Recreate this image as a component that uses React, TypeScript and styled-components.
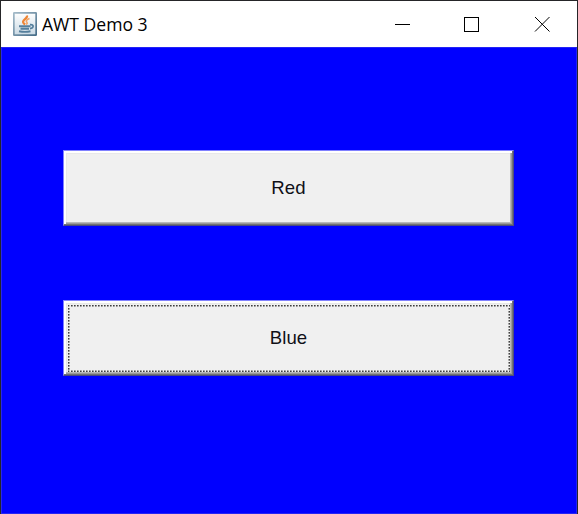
import React from "react";
import styled, { createGlobalStyle, css } from "styled-components";

const GlobalStyle = createGlobalStyle`
  * { box-sizing: border-box; }
  body { margin: 0; overflow: hidden; background: #0000ff; }
`;

const Window = styled.div`
  width: 578px;
  height: 514px;
  display: flex;
  flex-direction: column;
  border: 1px solid #252528;
  border-bottom: 0;
`;

const TitleBar = styled.header`
  height: 46px;
  flex: none;
  display: flex;
  align-items: center;
  padding-left: 12px;
  background: #ffffff;
`;

const Title = styled.h1`
  flex: 1;
  margin: 0 0 0 5px;
  font: 400 17.6px/24px "Open Sans", "Noto Sans", sans-serif;
  letter-spacing: -0.02px;
  color: #000000;
  padding-bottom: 1px;
`;

const Controls = styled.div`
  display: flex;
  height: 100%;
`;

const ControlButton = styled.button`
  width: 70px;
  height: 46px;
  display: flex;
  align-items: center;
  justify-content: center;
  padding: 0;
  border: 0;
  background: transparent;
`;

const Client = styled.main`
  flex: 1;
  display: flex;
  flex-direction: column;
  gap: 74px;
  padding: 102px 62px 0 61px;
  background: #0000ff;
  border: 1px solid #2424f4;
`;

const AwtButton = styled.button`
  height: 76px;
  flex: none;
  display: flex;
  padding: 1px;
  border: 1px solid;
  border-color: #8080ff #4c4c80 #4c4c80 #8080ff;
  background: #f0f0f0;
  box-shadow: inset -1px -1px #737373, inset 2px 2px #ffffff,
    inset -2px -2px #999999, inset -3px -3px #b8b8b8, inset 3px 3px #e8e8e8;
  font: 400 18.6px/24px "Liberation Sans", Arial, sans-serif;
  letter-spacing: 0.1px;
  color: #101018;
`;

const dots = "#404040 0 1px, #808080 1px 2px, #f0f0f0 2px 3px";
const fade = "linear-gradient(#f0f0f080, #f0f0f080)";

/* Dotted focus rectangle: 3px dot pitch, with a softer inner edge. */
const focusRectangle = css`
  background:
    ${fade} 0 1px / 100% 1px no-repeat,
    ${fade} 0 calc(100% - 1px) / 100% 1px no-repeat,
    ${fade} 1px 0 / 1px 100% no-repeat,
    ${fade} calc(100% - 1px) 0 / 1px 100% no-repeat,
    linear-gradient(90deg, ${dots}) 0 0 / 3px 2px repeat-x,
    linear-gradient(90deg, ${dots}) 0 100% / 3px 2px repeat-x,
    linear-gradient(${dots}) 0 0 / 2px 3px repeat-y,
    linear-gradient(${dots}) 100% 0 / 2px 3px repeat-y;
`;

const Label = styled.span<{ $focused?: boolean }>`
  flex: 1;
  height: 67px;
  margin: 3px 2px 0 3px;
  padding: 0 1px 2px 0;
  display: flex;
  align-items: center;
  justify-content: center;
  ${(p) => p.$focused && focusRectangle}
`;

const JavaIcon = () => (
  <svg width="24" height="24" viewBox="0 0 24 24" fill="none">
    <defs>
      <linearGradient id="frame" x1="0" y1="0" x2="1" y2="1">
        <stop stopColor="#a3bac8" />
        <stop offset="1" stopColor="#456c88" />
      </linearGradient>
      <linearGradient id="paper" x1="0" y1="0" x2="0" y2="1">
        <stop stopColor="#ffffff" />
        <stop offset="1" stopColor="#c9d9e4" />
      </linearGradient>
    </defs>
    <rect x=".8" y=".8" width="22.4" height="22.4" rx="1" fill="url(#paper)" stroke="url(#frame)" strokeWidth="1.8" />
    <path d="M14 3.5c1 3-5 4.2-3.8 7 .5 1 1.3 1.5 2 2" stroke="#ed8535" strokeWidth="2.2" />
    <path d="M16.5 6.5c-3 1.2-4 2.5-2.5 4 .5.8 0 1.5-.8 2" stroke="#f2a263" strokeWidth="1.6" />
    <path d="M6 14.3h11.5M7.5 16.8h8.5M6 19.3c4 .8 8 .8 11.5 0" stroke="#557f9c" strokeWidth="1.9" />
    <path d="M17 12.7c4.5-.7 3.8 3.5 0 3.9" stroke="#557f9c" strokeWidth="1.7" />
  </svg>
);

export default function App() {
  return (
    <>
      <GlobalStyle />
      <Window>
        <TitleBar>
          <JavaIcon />
          <Title>AWT Demo 3</Title>
          <Controls>
            <ControlButton aria-label="Minimize">
              <svg width="16" height="16" shapeRendering="crispEdges">
                <path d="M1 8h15v1H1z" />
              </svg>
            </ControlButton>
            <ControlButton aria-label="Maximize">
              <svg width="16" height="16" shapeRendering="crispEdges">
                <path d="M.5 1.5h14v14H.5z" fill="none" stroke="#000" />
              </svg>
            </ControlButton>
            <ControlButton aria-label="Close">
              <svg width="16" height="16">
                <path d="M1 1l14.5 14.5M15.5 1L1 15.5" fill="none" stroke="#000" />
              </svg>
            </ControlButton>
          </Controls>
        </TitleBar>
        <Client>
          <AwtButton>
            <Label>Red</Label>
          </AwtButton>
          <AwtButton>
            <Label $focused>Blue</Label>
          </AwtButton>
        </Client>
      </Window>
    </>
  );
}
